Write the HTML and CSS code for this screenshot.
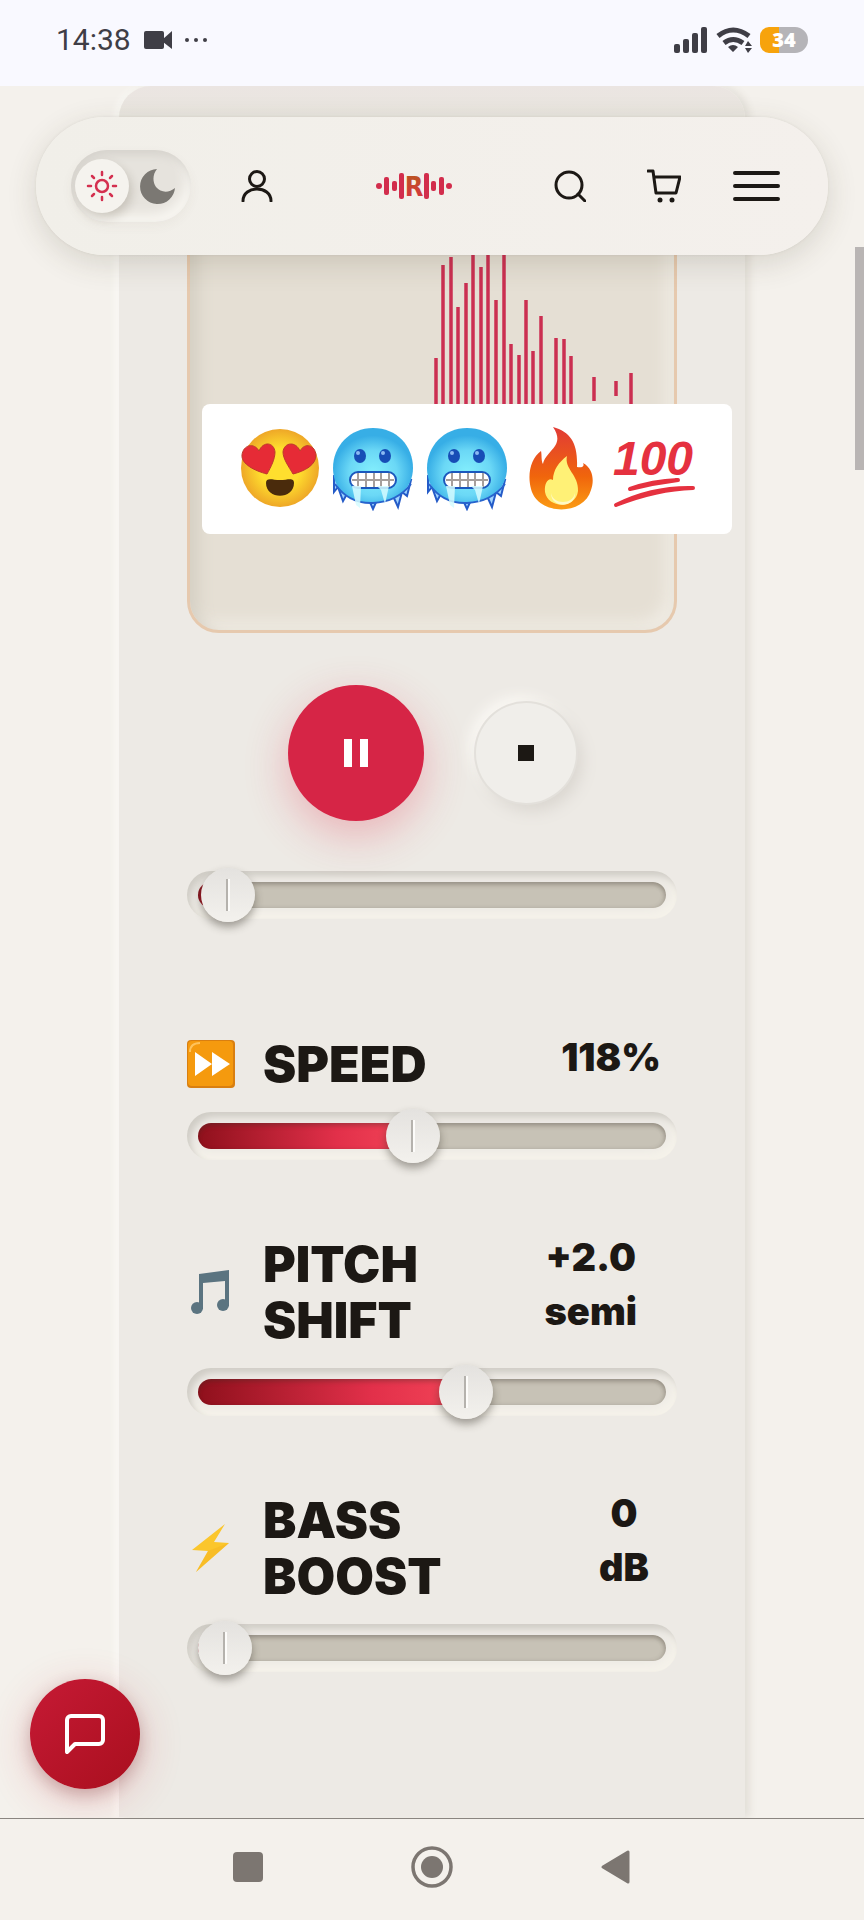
FILE: index.html
```
<!DOCTYPE html>
<html lang="en">
<head>
  <meta charset="utf-8">
  <meta name="viewport" content="width=device-width, initial-scale=1">
  <title>Remix player</title>
  <link rel="stylesheet" href="styles.css">
</head>
<body>
  <div class="status-bar">
    <div class="status-group">
      <span class="clock">14:38</span>
      <svg class="video-icon" width="28" height="20" viewBox="0 0 28 20"><rect x="0" y="1" width="20" height="18" rx="2"/><path d="M19 9 28 1v18l-9-7z"/></svg>
      <svg width="24" height="20" viewBox="0 0 24 20"><circle cx="2" cy="10" r="2"/><circle cx="11" cy="10" r="2"/><circle cx="20" cy="10" r="2"/></svg>
    </div>
    <div class="status-group status-right">
      <svg width="34" height="26" viewBox="0 0 34 26"><rect x="0" y="17" width="6" height="9" rx="2"/><rect x="9" y="12" width="6" height="14" rx="2"/><rect x="18" y="6" width="6" height="20" rx="2"/><rect x="27" y="0" width="6" height="26" rx="2"/></svg>
      <svg width="36" height="26" viewBox="0 0 36 26">
        <path d="M2 9q15-12 31 0M8 16q9-7 19 0" fill="none" stroke="#3f3e46" stroke-width="5"/>
        <path d="M12 20q5-4 10 0l-5 5zM32 14l4 5h-7zM29 21h7l-4 5z"/>
      </svg>
      <span class="battery">34</span>
    </div>
  </div>

  <div class="page">
    <header class="site-header">
      <div class="header-group header-left">
        <div class="theme-toggle">
          <button class="theme-btn active" aria-label="Light theme">
            <svg width="32" height="32" viewBox="0 0 32 32" fill="none" stroke="#d4304f" stroke-width="2.5" stroke-linecap="round"><circle cx="16" cy="16" r="6"/><path d="M16 2v3M16 27v3M2 16h3M27 16h3M6 6l2 2M24 24l2 2M6 26l2-2M24 8l2-2"/></svg>
          </button>
          <button class="theme-btn" aria-label="Dark theme">
            <svg width="36" height="36" viewBox="0 0 36 36" fill="#7b7873"><path d="M17 1A17.500 17.500 0 1 0 35 20C29 25 21 25 16 19 12 13 13 6 17 1z"/></svg>
          </button>
        </div>
        <button class="icon-btn" aria-label="Account">
          <svg width="32" height="32" viewBox="0 0 32 32"><circle cx="16" cy="9" r="7.500"/><path d="M2 31c0-16 28-16 28 0"/></svg>
        </button>
      </div>
      <a href="#" class="logo" aria-label="Home">
        <svg width="76" height="36" viewBox="0 0 76 36">
          <defs>
            <linearGradient id="logoFill" x1="0" y1="0" x2="0" y2="1"><stop offset="0" stop-color="#b65a1c"/><stop offset="1" stop-color="#dc2f45"/></linearGradient>
          </defs>
          <g fill="#d22d4c">
            <circle cx="3" cy="18" r="3"/><rect x="8" y="9" width="5" height="18" rx="2"/><rect x="16" y="13" width="5" height="10" rx="2"/><rect x="23" y="5" width="5" height="26" rx="2"/>
            <rect x="48" y="5" width="5" height="26" rx="2"/><rect x="55" y="13" width="5" height="10" rx="2"/><rect x="63" y="9" width="5" height="18" rx="2"/><circle cx="73" cy="18" r="3"/>
          </g>
          <text class="logo-letter" x="38" y="28" text-anchor="middle" fill="url(#logoFill)">R</text>
        </svg>
      </a>
      <div class="header-group header-right">
        <button class="icon-btn" aria-label="Search">
          <svg width="32" height="32" viewBox="0 0 32 32"><circle cx="15" cy="15" r="13"/><path d="M24 24l7 7"/></svg>
        </button>
        <button class="icon-btn cart" aria-label="Cart">
          <svg width="34" height="34" viewBox="0 0 34 34"><path d="M1 2h5l3 22h20l4-16H8"/><circle class="wheel" cx="13" cy="31" r="2.500"/><circle class="wheel" cx="25" cy="31" r="2.500"/></svg>
        </button>
        <button class="icon-btn" aria-label="Menu">
          <svg class="menu-icon" width="48" height="32" viewBox="0 0 48 32"><path d="M2 3h43M2 16h43M2 29h43"/></svg>
        </button>
      </div>
    </header>

    <main class="player">
      <div class="visualizer">
        <!-- bars mirrored around the middle line -->
        <svg viewBox="0 0 484 482" fill="none" stroke="#cb2f51" stroke-width="3.500">
          <path d="M246 210v62M253 117v248M261 109v264M268 159v164M276 135v212M283 90v294M291 119v244M298 90v294M306 152v178M314 90v294M321 196v90M329 207v68M336 152v178M343 203v76M351 168v146M366 190v102M374 191v100M381 208v66M404 229v24M426 233v15M441 225v32"/>
        </svg>
      </div>

      <div class="transport">
        <button class="pause-btn" aria-label="Pause"><svg width="24" height="28" viewBox="0 0 24 28"><path d="M0 0h8v28H0zM16 0h8v28h-8z"/></svg></button>
        <button class="stop-btn" aria-label="Stop"><svg width="16" height="16" viewBox="0 0 16 16"><path d="M0 0h16v16H0z"/></svg></button>
      </div>
      <input class="slider" type="range" min="0" max="1000" value="7" style="--value: 0.007" aria-label="Seek">

      <section class="controls">
        <div class="control">
          <div class="control-head">
            <label for="speed">
              <svg class="control-icon" viewBox="0 0 48 48"><rect width="48" height="48" rx="4" fill="#d97f10"/><rect x="1" y="1" width="45" height="45" rx="4" fill="#f59a0e"/><path d="M3 12Q3 3 13 3" fill="none" stroke="#ffc35c" stroke-width="2"/><path d="M8 12l17 12L8 36zM25 12l18 12-18 12z" fill="#fff"/></svg>
              <span>SPEED</span>
            </label>
            <output class="value" for="speed">118%</output>
          </div>
          <input class="slider" id="speed" type="range" min="50" max="200" value="118" style="--value: 0.453">
        </div>
        <div class="control">
          <div class="control-head">
            <label for="pitch">
              <svg class="control-icon" viewBox="0 0 48 48" fill="#5b7480"><path d="M12 6l30-4v36h-4V13l-22 2v26h-4z"/><ellipse cx="10" cy="40" rx="6" ry="6"/><ellipse cx="36" cy="37" rx="6" ry="6"/></svg>
              <span>PITCH<br>SHIFT</span>
            </label>
            <output class="value value-semi" for="pitch">+2.0<br>semi</output>
          </div>
          <input class="slider" id="pitch" type="range" min="-12" max="12" value="2" style="--value: 0.583">
        </div>
        <div class="control">
          <div class="control-head">
            <label for="bass">
              <svg class="control-icon" viewBox="0 0 48 48"><path d="M38 0 5 26l16 1L9 48l33-29-15-1z" fill="#fbc62c"/><path d="M21 27 9 48l33-29z" fill="#f5b01f" opacity=".4"/></svg>
              <span>BASS<br>BOOST</span>
            </label>
            <output class="value value-db" for="bass">0<br>dB</output>
          </div>
          <input class="slider" id="bass" type="range" min="0" max="24" value="0" style="--value: 0">
        </div>
      </section>
    </main>

    <div class="sticker" role="img" aria-label="Heart eyes, cold face, cold face, fire, one hundred">
      <svg viewBox="0 0 84 84">
        <defs>
          <radialGradient id="yellowFace"><stop offset=".5" stop-color="#ffdf2e"/><stop offset="1" stop-color="#eea727"/></radialGradient>
          <radialGradient id="coldFace" cx=".5" cy=".6"><stop offset="0" stop-color="#84effd"/><stop offset=".6" stop-color="#6bd8f6"/><stop offset="1" stop-color="#37aee6"/></radialGradient>
          <linearGradient id="flame" x1="0" y1="0" x2="0" y2="1"><stop offset="0" stop-color="#e13b36"/><stop offset=".6" stop-color="#f0650c"/><stop offset="1" stop-color="#fb9c14"/></linearGradient>
        </defs>
        <circle cx="43" cy="41" r="39" fill="url(#yellowFace)"/>
        <g fill="#e62b36" stroke="#bd3a2c" stroke-width="1"><path d="M30 47C18 44 4 37 5 28 6 18 17 15 22 24 26 14 37 15 38 25 38 32 34 40 30 47z"/><path d="M56 47C52 40 46 32 46 25 47 15 59 14 63 24 68 15 78 18 79 28 79 38 68 44 56 47z"/></g>
        <path d="M29 56c0-6 6-3 14-3s14-3 14 3c0 17-28 17-28 0z" fill="#4a2b0c"/>
      </svg>
      <svg viewBox="0 0 84 84">
        <g id="frozen">
          <path d="M3 49v16l4-5 5 14 5-9 21 8 4 9 4-9 16-4 5 11 4-15 5 4 4-16z" fill="#9fd4ff" stroke="#245bc8" stroke-width="2"/>
          <path d="M42 1C66 1 82 19 82 41 82 62 64 76 42 76 18 76 2 63 2 41 2 19 19 1 42 1z" fill="url(#coldFace)"/>
          <path d="M4 57Q18 77 42 76T80 57" fill="none" stroke="#2763cd" stroke-width="2"/>
          <ellipse cx="29" cy="29" rx="6" ry="7" fill="#174db6"/><ellipse cx="54" cy="29" rx="6" ry="7" fill="#174db6"/><circle cx="27" cy="26" r="2" fill="#8cb9f2"/><circle cx="52" cy="26" r="2" fill="#8cb9f2"/>
          <rect x="19" y="45" width="46" height="16" rx="8" fill="#fff" stroke="#1b58bd" stroke-width="2"/>
          <path d="M21 53h42M27 46v14M35 46v14M43 46v14M50 46v14M58 46v14" stroke="#a69f9c" stroke-width="2"/>
          <path d="M21 59h9l-1 22-4-3zM46 59h12l-4 18-4-14z" fill="#d5fbff" opacity=".85"/>
        </g>
      </svg>
      <svg viewBox="0 0 84 84"><use href="#frozen"/></svg>
      <svg viewBox="0 0 84 84">
        <path d="M34 0C52 5 59 17 58 40 62 41 66 40 64 36 75 42 75 55 72 63 65 89 19 89 12 62 8 47 12 31 22 24 23 28 22 34 24 37 27 23 47 19 34 0z" fill="url(#flame)"/>
        <path d="M48 29C45 42 60 48 59 64 57 82 29 82 26 65 25 55 30 50 34 53 34 43 40 35 48 29z" fill="#fff176"/>
        <path d="M32 66c2 12 22 12 24 0 1 15-24 16-24 0z" fill="#fff9c4"/>
      </svg>
      <svg viewBox="0 0 84 84" fill="none" stroke="#e5313f" stroke-width="6" stroke-linecap="round">
        <!-- the 100 mark keeps its digits as text, underlined twice -->
        <text class="hundred" x="40" y="48" text-anchor="middle" fill="#e5313f" stroke="none">100</text>
        <path class="stroke-top" d="M17 62q22-8 48-9q-24 3-48 9z"/>
        <path class="stroke-bottom" d="M3 78q36-18 77-17q-36 1-77 17z"/>
      </svg>
    </div>

    <button class="chat-btn" aria-label="Open chat">
      <svg width="48" height="48" viewBox="0 0 24 24"><path d="M21 15a2 2 0 0 1-2 2H7l-4 4V5a2 2 0 0 1 2-2h14a2 2 0 0 1 2 2z"/></svg>
    </button>
    <div class="scroll-thumb"></div>
  </div>

  <nav class="system-nav">
    <button aria-label="Recent apps"><svg width="42" height="42" viewBox="0 0 42 42"><rect x="6" y="6" width="30" height="30" rx="4"/></svg></button>
    <button aria-label="Home screen"><svg width="42" height="42" viewBox="0 0 42 42"><circle cx="21" cy="21" r="19" fill="none" stroke="#7c7671" stroke-width="3.500"/><circle cx="21" cy="21" r="11"/></svg></button>
    <button aria-label="Back"><svg width="42" height="42" viewBox="0 0 42 42"><path d="M8 21 33 6v30z" stroke="#7c7671" stroke-width="3" stroke-linejoin="round"/></svg></button>
  </nav>
</body>
</html>
```
FILE: styles.css
```
* {
  box-sizing: border-box;
}
body {
  margin: 0;
  min-height: 100vh;
  display: flex;
  flex-direction: column;
  background: #f4f1ec;
  color: #1c1814;
  font-family: Inter, "Open Sans", sans-serif;
}
button {
  border: none;
  padding: 0;
  background: none;
  cursor: pointer;
  display: flex;
  align-items: center;
  justify-content: center;
}
svg {
  display: block;
  flex: none;
}

/* phone status bar */
.status-bar {
  height: 86px;
  padding: 0 56px 6px;
  display: flex;
  justify-content: space-between;
  align-items: center;
  background: #f9f9ff;
  fill: #3f3e46;
}
.status-group {
  display: flex;
  align-items: center;
  gap: 13px;
}
.status-right {
  gap: 8px;
}
.clock {
  font: 400 30px/36px Roboto, sans-serif;
  color: #3f3e46;
}
.battery {
  width: 48px;
  height: 26px;
  border-radius: 9px 13px 13px 9px;
  background: linear-gradient(90deg, #f7a30c 40%, #b5b4b8 40%);
  color: #fff;
  font: 800 20px/26px "Open Sans", sans-serif;
  text-align: center;
}

.page {
  position: relative;
  flex: 1;
  overflow: hidden;
  background: #f4f1ec;
}

/* floating header */
.site-header {
  position: absolute;
  z-index: 2;
  top: 31px;
  left: 36px;
  right: 36px;
  height: 138px;
  padding: 0 47px 0 35px;
  display: flex;
  align-items: center;
  justify-content: space-between;
  border-radius: 69px;
  background: linear-gradient(90deg, #f1efe9, #f4f0ec);
  box-shadow: 0 8px 30px rgba(70, 60, 40, 0.16), 0 0 3px rgba(70, 60, 40, 0.08);
}
.header-group {
  display: flex;
  align-items: center;
}
.header-left {
  gap: 50px;
}
.header-right {
  gap: 52px;
}
.cart {
  margin-left: 9px;
}
.theme-toggle {
  display: flex;
  align-items: center;
  gap: 2px;
  height: 72px;
  padding: 0 6px 0 4px;
  border-radius: 36px;
  background: #e6e3dd;
  box-shadow: inset 3px 5px 8px #d6d3cd, inset -5px -8px 12px #f8f6f1, 0 4px 12px rgba(90, 80, 60, 0.05);
}
.theme-btn {
  width: 54px;
  height: 54px;
  border-radius: 50%;
}
.theme-btn.active {
  background: #f5f3ee;
  box-shadow: 3px 5px 10px rgba(80, 70, 50, 0.2);
}
.icon-btn svg {
  fill: none;
  stroke: #1c1814;
  stroke-width: 3;
  stroke-linecap: round;
  stroke-linejoin: round;
}
.icon-btn .wheel {
  fill: #1c1814;
  stroke: none;
}
.icon-btn .menu-icon {
  stroke-width: 4;
}
.logo-letter {
  font: bold 27px "DejaVu Sans Condensed", "DejaVu Sans", sans-serif;
}

/* player card */
.player {
  min-height: 100%;
  margin: 0 119px;
  padding: 59px 68px 145px;
  border-radius: 32px 32px 0 0;
  background: linear-gradient(#ebe5e2, #e9e6df 30px, #edeae5 180px);
  box-shadow: 4px 0 8px rgba(90, 80, 60, 0.12), -4px 0 6px #fbfaf6;
}
.visualizer {
  border: 3px solid #e6c9ae;
  border-radius: 32px;
  background: #e5dfd4;
  box-shadow: inset 8px 8px 16px #d4cfc3, inset -8px -8px 16px #f0ece4;
}
.visualizer svg {
  width: 100%;
}
.transport {
  display: flex;
  align-items: center;
  justify-content: center;
  gap: 52px;
  margin: 52px 0 50px;
}
.pause-btn {
  width: 136px;
  height: 136px;
  border-radius: 50%;
  background: #d62546;
  fill: #fff;
  box-shadow: 0 14px 44px rgba(225, 50, 75, 0.3);
}
.stop-btn {
  width: 100px;
  height: 100px;
  border-radius: 50%;
  background: #f0eeea;
  fill: #1c1814;
  box-shadow: 0 0 0 2px #e3e0db, 6px 8px 16px #dad6d0, -6px -6px 14px #fbf9f5;
}

/* sliders, --value is the filled share from 0 to 1 */
.slider {
  appearance: none;
  display: block;
  width: 100%;
  height: 48px;
  margin: 0;
  padding: 0 11px;
  border-radius: 24px;
  background: transparent;
  box-shadow: inset 4px 5px 6px #d0cdc6, inset -4px -8px 8px #f5f2ea;
}
.slider::-webkit-slider-runnable-track {
  height: 26px;
  border-radius: 13px;
  background:
    linear-gradient(90deg, #8f101c, #e2304a 65%, #f34558) 0 0 / calc(27px + (100% - 54px) * var(--value)) 100% no-repeat,
    #c7c2b6;
  box-shadow: inset 0 3px 4px rgba(60, 50, 40, 0.28), inset -2px 0 4px rgba(60, 50, 40, 0.12);
}
.slider::-webkit-slider-thumb {
  appearance: none;
  width: 54px;
  height: 54px;
  margin-top: -14px;
  border-radius: 50%;
  background:
    linear-gradient(90deg, #b5b2ad 2px, #fdfcfa 2px) center / 4px 32px no-repeat,
    linear-gradient(#e4e2df, #f3f1ed);
  box-shadow: 0 5px 8px rgba(50, 45, 35, 0.42);
}

.controls {
  display: flex;
  flex-direction: column;
  gap: 76px;
  margin-top: 117px;
}
.control-head {
  display: flex;
  align-items: flex-start;
  justify-content: space-between;
  margin-bottom: 20px;
}
.control-head label {
  display: flex;
  align-items: center;
  gap: 28px;
  font-size: 50px;
  line-height: 56px;
  font-weight: 900;
}
.control-icon {
  width: 48px;
  height: 48px;
}
.value {
  margin-top: -6px;
  margin-right: 16px;
  font-size: 38px;
  line-height: 54px;
  font-weight: 900;
  text-align: center;
}
.value-semi {
  margin-right: 40px;
}
.value-db {
  margin-right: 28px;
}

/* things lying over the page */
.sticker {
  position: absolute;
  z-index: 1;
  top: 318px;
  left: 202px;
  height: 130px;
  padding: 0 35px;
  display: flex;
  align-items: center;
  gap: 10px;
  border-radius: 8px;
  background: #fff;
}
.sticker svg {
  width: 84px;
  height: 84px;
}
.hundred {
  font: italic bold 48px "Liberation Sans", sans-serif;
}
.stroke-top,
.stroke-bottom {
  stroke-width: 4;
  stroke-linejoin: round;
}
.chat-btn {
  position: absolute;
  left: 30px;
  bottom: 29px;
  width: 110px;
  height: 110px;
  border-radius: 50%;
  background: linear-gradient(135deg, #c61a35, #a90f1e);
  box-shadow: 0 10px 44px rgba(210, 40, 60, 0.24), 0 6px 16px rgba(80, 30, 30, 0.25);
}
.chat-btn svg {
  fill: none;
  stroke: #fff;
  stroke-width: 2;
  stroke-linecap: round;
  stroke-linejoin: round;
}
.scroll-thumb {
  position: absolute;
  top: 161px;
  right: 0;
  width: 9px;
  height: 223px;
  background: #b9b5b4;
}

/* phone navigation */
.system-nav {
  height: 102px;
  padding-bottom: 6px;
  display: flex;
  align-items: center;
  justify-content: center;
  gap: 142px;
  border-top: 1px solid #8a8580;
  background: #f4f1ec;
}
.system-nav button {
  fill: #7c7671;
}
```
